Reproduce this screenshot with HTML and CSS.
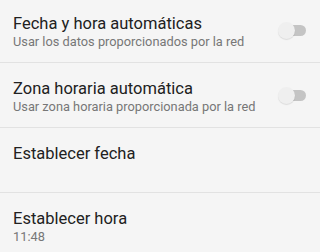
FILE: index.html
```html
<!DOCTYPE html>
<html lang="es">
<head>
    <meta charset="UTF-8">
    <meta name="viewport" content="width=device-width, initial-scale=1.0">
    <title>Fecha y hora</title>
    <link rel="stylesheet" href="styles.css">
</head>
<body>
    <div class="list">
        <div class="item">
            <div class="text">
                <div class="title">Fecha y hora automáticas</div>
                <div class="summary">Usar los datos proporcionados por la red</div>
            </div>
            <span class="switch"><span class="thumb"></span></span>
        </div>
        <div class="item">
            <div class="text">
                <div class="title">Zona horaria automática</div>
                <div class="summary">Usar zona horaria proporcionada por la red</div>
            </div>
            <span class="switch"><span class="thumb"></span></span>
        </div>
        <div class="item">
            <div class="text">
                <div class="title">Establecer fecha</div>
            </div>
        </div>
        <div class="item">
            <div class="text">
                <div class="title">Establecer hora</div>
                <div class="summary">11:48</div>
            </div>
        </div>
    </div>
</body>
</html>
```

FILE: styles.css
```css
html, body {
    margin: 0;
    padding: 0;
    background: #f5f5f5;
    overflow: hidden;
}
body {
    font-family: Roboto, 'Noto Sans', sans-serif;
}
.list {
    margin-top: -3px;
}
.item {
    display: flex;
    align-items: center;
    height: 64px;
    border-top: 1px solid #e2e2e2;
    padding: 0 14px 0 13px;
}
.text {
    flex: 1;
    align-self: flex-start;
    padding-top: 16px;
}
.title {
    font-size: 16.5px;
    line-height: 20px;
    color: #212121;
}
.summary {
    font-size: 12.8px;
    line-height: 16px;
    color: #777;
}
.switch {
    position: relative;
    width: 22px;
    height: 11px;
    border-radius: 6px;
    background: #c4c4c4;
}
.thumb {
    position: absolute;
    left: -6px;
    top: -3px;
    width: 17px;
    height: 17px;
    border-radius: 50%;
    background: #efefef;
    box-shadow: 0 1px 1px rgba(0,0,0,0.1);
}
```
